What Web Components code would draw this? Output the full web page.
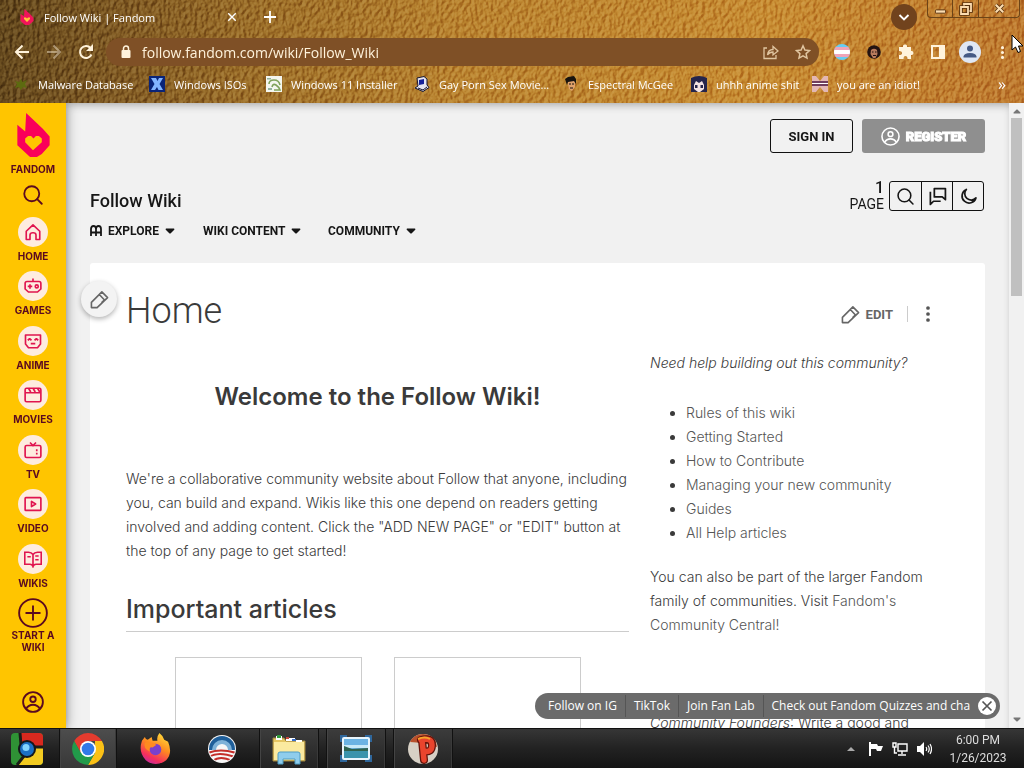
<!DOCTYPE html>
<html lang="en">
<head>
<meta charset="utf-8">
<title>Follow Wiki | Fandom</title>
<style>
html,body{margin:0;height:100%}
body{overflow:hidden;font-family:Roboto,"Liberation Sans",sans-serif;color:#3a3a3a}
</style>
</head>
<body>
<desktop-screen></desktop-screen>
<script>
const ICONS = {
  flame: ['0 0 34 46', '<path fill="#fa005a" d="M10 1 27 17 34 25V34L26 43 21 46H14L1 34V13L9 20Z"/><path fill="#ffc500" d="M17 39 9 31V27L12 24.500H15L17.500 27 20 24.500H23L26 27V31Z"/>'],
  search: ['0 0 24 24', '<g fill="none" stroke="currentColor" stroke-width="2.200" stroke-linecap="round"><circle cx="10.500" cy="10.500" r="9"/><path d="m17 17 5.500 5.500"/></g>'],
  home: ['0 0 24 24', '<path fill="none" stroke="currentColor" stroke-width="2.200" stroke-linejoin="round" d="M3 22V11L12 2.500 21 11V22H16V16Q16 13 12 13 8 13 8 16V22Z"/>'],
  games: ['0 0 24 24', '<g fill="none" stroke="currentColor" stroke-width="2.200"><path d="M4 6H20Q22.500 6 22.500 8.500V16L18 20H6L1.500 16V8.500Q1.500 6 4 6ZM12 6V2M5 12.500H11M8 9.500V15.500"/><circle cx="17" cy="12.500" r="2"/></g>'],
  anime: ['0 0 24 24', '<g fill="none" stroke="currentColor" stroke-width="2.200" stroke-linejoin="round"><path d="M2 4H22V16L18 21H6L2 16ZM5 11 7.500 9 10 11M14 11 16.500 9 19 11M9 15.500H15"/></g>'],
  movies: ['0 0 24 24', '<g fill="none" stroke="currentColor" stroke-width="2.200"><rect x="1.500" y="3" width="21" height="18" rx="2"/><path d="M2 9H22M6 3 9 8M12 3 15 8M18 3 21 8"/></g>'],
  tv: ['0 0 24 24', '<g fill="none" stroke="currentColor" stroke-width="2.200"><rect x="1.500" y="6" width="21" height="16" rx="2"/><path d="M8 2 12 6 16 2M17 11V13.500M17 15.500V18"/></g>'],
  video: ['0 0 24 24', '<g fill="none" stroke="currentColor" stroke-width="2.200" stroke-linejoin="round"><rect x="1.500" y="3.500" width="21" height="17" rx="1"/><path d="M10 8.500V15.500L15.500 12Z"/></g>'],
  wikis: ['0 0 24 24', '<g fill="none" stroke="currentColor" stroke-width="2.200"><path d="M12 6Q10 3 6 3H1V19H8Q11 19 12 22 13 19 16 19H23V3H18Q14 3 12 6V21M4.500 9H9M15 8H19.500M15 13H19.500"/></g>'],
  plus: ['0 0 32 32', '<g fill="none" stroke="currentColor" stroke-width="2"><circle cx="16" cy="16" r="14.800"/><path d="M16 8V24M8 16H24"/></g>'],
  user: ['0 0 24 24', '<g fill="none" stroke="currentColor" stroke-width="2"><circle cx="12" cy="12" r="10.800"/><circle cx="12" cy="9" r="3"/><path d="M4.500 19.500Q7 15 12 15 17 15 19.500 19.500"/></g>'],
  books: ['0 0 12 12', '<g fill="none" stroke="currentColor" stroke-width="1.800"><path d="M1 11V4Q1 1 3.500 1 6 1 6 4V11M6 4Q6 1 8.500 1 11 1 11 4V11M1 7.500H11"/></g>'],
  pencil: ['0 0 20 20', '<g fill="none" stroke="currentColor" stroke-width="1.700" stroke-linejoin="round"><path d="M1.500 18.500V13L12.500 2 18.500 8 7.500 18.500ZM9.800 4.800 15.500 10.800M12 13.500 14.500 11"/></g>'],
  chat: ['0 0 24 24', '<g fill="none" stroke="currentColor" stroke-width="2.200" stroke-linejoin="round"><path d="M8 2H22V16L18 12.500H8ZM3 6V22L7 18H16"/></g>'],
  moon: ['0 0 24 24', '<path fill="none" stroke="currentColor" stroke-width="2.400" stroke-linejoin="round" d="M9 2A10 10 0 1 0 22.500 14 8 8 0 0 1 9 2Z"/>'],
  dots: ['0 0 24 24', '<g fill="currentColor"><circle cx="12" cy="3" r="2.800"/><circle cx="12" cy="12" r="2.800"/><circle cx="12" cy="21" r="2.800"/></g>'],
  caret: ['0 0 10 6', '<path fill="currentColor" d="M1 .500H9Q10 1 9 2L5.500 5.500H4.500L1 2Q0 1 1 .500Z"/>'],
  cross: ['0 0 12 12', '<path stroke="currentColor" stroke-width="1.700" d="m1.500 1.500 9 9m0-9-9 9"/>'],
  add: ['0 0 12 12', '<path stroke="currentColor" stroke-width="1.800" d="M6 0V12M0 6H12"/>'],
  back: ['0 0 16 16', '<path fill="none" stroke="currentColor" stroke-width="2" d="M15 8H2M8.500 1.500 2 8 8.500 14.500"/>'],
  forward: ['0 0 16 16', '<path fill="none" stroke="currentColor" stroke-width="2" d="M1 8H14M7.500 1.500 14 8 7.500 14.500"/>'],
  reload: ['0 0 16 16', '<path fill="none" stroke="currentColor" stroke-width="2" d="M13.500 10.500A6 6 0 1 1 12.500 4L14 6"/><path fill="currentColor" d="M15 0V7H8Z"/>'],
  lock: ['0 0 12 14', '<rect x="1.500" y="5" width="9" height="8" rx="1" fill="currentColor"/><path fill="none" stroke="currentColor" stroke-width="1.500" d="M3.500 6V3.500A2.500 2.500 0 0 1 8.500 3.500V6"/>'],
  share: ['0 0 16 16', '<path fill="none" stroke="currentColor" stroke-width="1.300" d="M4 4H1V14.500H13V11M4.500 11Q5 5.500 10 5.500V2.500L15 7 10 11V8Q6.500 8 4.500 11Z"/>'],
  star: ['0 0 16 16', '<path fill="none" stroke="currentColor" stroke-width="1.500" d="m8 1.800 1.900 4.200 4.600.500-3.400 3.100.900 4.500L8 11.800 4 14.100l.900-4.500L1.500 6.500 6.100 6Z"/>'],
  flag: ['0 0 16 16', '<clipPath id="c"><circle cx="8" cy="8" r="8"/></clipPath><g clip-path="url(#c)"><path fill="#66cdf4" d="M0 0H16V16H0Z"/><path fill="#f0a4b8" d="M0 3H16V13H0Z"/><path fill="#fff" d="M0 6H16V10H0Z"/></g>'],
  face: ['0 0 14 14', '<circle cx="7" cy="7" r="6.800" fill="#231312"/><path fill="#b87a5c" d="M4 5Q7 2.500 10 5L10.500 9 8.500 13H6L3.500 9Z"/><path stroke="#231312" d="M5 7H6.500M8 7H9.500M6 10.500H9"/>'],
  puzzle: ['0 0 16 16', '<path fill="currentColor" d="M1 3H5Q4.500 .500 7 .500T9 3H13V7Q15.500 6.500 15.500 9T13 11V15H9.500Q9.500 12 7.500 12T5.500 15H1V11Q4 11 4 9T1 7Z"/>'],
  panel: ['0 0 16 16', '<path fill="none" stroke="currentColor" stroke-width="2" d="M2 2H14V14H2Z"/><path fill="currentColor" d="M9 2H14V14H9Z"/>'],
  avatar: ['0 0 22 22', '<circle cx="11" cy="11" r="11" fill="#dfe7f4"/><circle cx="11" cy="7.500" r="3" fill="#455a85"/><path fill="#455a85" d="M4.500 15.500Q5 12 11 12T17.500 15.500V16.500H4.500Z"/>'],
  chevron: ['0 0 12 12', '<path fill="none" stroke="currentColor" stroke-width="1.900" d="m1.500 4 4.500 4.500L10.500 4"/>'],
  fav: ['0 0 14 16', '<path fill="#f0145a" d="M4.500 0 11 6 13.500 9V12L9 16H5L.500 12V5L4 7Z"/><path fill="#ffc23c" d="M7 13 4 10V8.500H6L7 9.500 8 8.500H10V10Z"/>'],
  minimize: ['0 0 14 14', '<rect x="1.500" y="8.500" width="11" height="3.500" rx="1" fill="#fbdcb0" stroke="#54310f"/>'],
  restore: ['0 0 14 14', '<g fill="none" stroke="#54310f" stroke-width="3.600"><path d="M5 3.500V2H12V9H10.500M2 5H9V12H2Z"/></g><g fill="none" stroke="#fbdcb0" stroke-width="1.800"><path d="M5 3.500V2H12V9H10.500M2 5H9V12H2Z"/></g>'],
  winclose: ['0 0 14 14', '<path stroke="#54310f" stroke-width="4" d="m3 3 8 8m0-8-8 8"/><path stroke="#fbdcb0" stroke-width="2.300" d="m3 3 8 8m0-8-8 8"/>'],
  bmGreen: ['0 0 16 16', '<path fill="#5d6a10" d="m8 3 1.500 3L14 4 12 8 14 12 10 11 8 14 6 11 2 12 4 8 2 5 6 6Z"/>'],
  bmX: ['0 0 16 16', '<path fill="#0a2478" d="M0 0H16V16H0Z"/><path fill="#82b4ff" d="M2 2H7L8.500 5 10 2H14L10.500 8 14 14H9.500L8 11 6 14H2L5.500 8Z"/>'],
  bmLeaf: ['0 0 16 16', '<path fill="#f4f6ef" d="M0 0H16V16H0Z"/><path fill="none" stroke="#7fa25b" stroke-width="1.600" d="M3 8Q3 4 8 4T14 9M6 11Q7 7 10 9T14 14H8"/><path fill="#93b3a0" d="M1 2H5V3.500H1ZM2 12H6V14H2Z"/>'],
  bmPc: ['0 0 16 16', '<path fill="#e4e4f0" stroke="#171732" d="M3 2 10 .500 13 3V9L15 11.500 9 15.500 1 12 4 10Z"/><path fill="#15209a" d="M5 4 10 3V8L5 9Z"/><path stroke="#171732" d="m4 12 5 2 4-3"/>'],
  bmCartoon: ['0 0 16 16', '<path fill="#e0a16a" d="M4 4H12V11L9 15 6 13Z"/><path fill="#17130f" d="M2 3 5 1 11 0 13 3V8L11 5 5 6 4 9Z"/><path stroke="#17130f" d="M6 8H8M9 8H11M7 12H10"/>'],
  bmAnime: ['0 0 16 16', '<path fill="#25254c" d="M0 2Q8-2 16 2V16H0Z"/><path fill="#f3e3e3" d="m3 9 2-4 3 2 3-2 2 4v4l-4 3H7l-4-3Z"/><path fill="#25254c" d="M4 9H6.500V12H4ZM9.500 9H12V12H9.500Z"/>'],
  bmFlag: ['0 0 16 16', '<path fill="#e3b7b4" d="M0 0H4L8 5 12 0H16V16H12L8 11 4 16H0Z"/><path stroke="#4b1740" stroke-width="1.500" d="M0 6H16M0 9H16"/><path stroke="#fff" d="M0 7.500H16"/>'],
  oldChrome: ['0 0 32 32', '<clipPath id="o"><rect width="32" height="32" rx="4"/></clipPath><g clip-path="url(#o)"><path fill="#2f9235" d="M0 0H32V32H0Z"/><path fill="#d9291f" d="M9 0H32V14H16L10 9Z"/><path fill="#f3cb21" d="M32 15V32H7L16 20 22 15Z"/><path fill="none" stroke="#1c1c18" stroke-width="3" d="M9 0 10 12M32 14H21M6 32 13 23"/></g><circle cx="16" cy="16" r="9" fill="#14171c"/><circle cx="16" cy="16" r="7" fill="#1a6fc4"/><circle cx="15" cy="14.500" r="3.500" fill="#82d4ff"/>'],
  chrome: ['0 0 32 32', '<path fill="#e33b2e" d="M2.200 8A16 16 0 0 1 29.900 8H16L8.500 20Z"/><path fill="#fbc116" d="M29.900 8A16 16 0 0 1 16 32L22.900 20 23 8Z"/><path fill="#229a4a" d="M16 32A16 16 0 0 1 2.200 8L9.100 20 22.900 20Z"/><circle cx="16" cy="16" r="8" fill="#fff"/><circle cx="16" cy="16" r="6.300" fill="#3279e8"/>'],
  firefox: ['0 0 32 32', '<linearGradient id="f" x1=".800" y1="0" x2=".300" y2="1"><stop stop-color="#ffe03c"/><stop offset=".450" stop-color="#ff8a20"/><stop offset=".800" stop-color="#f5305c"/><stop offset="1" stop-color="#c52aa0"/></linearGradient><path fill="url(#f)" d="M20 0Q24 3 25 7L29 9Q34 21 27 28 16 36 6 28-2 20 2 8L5 4Q6 7 8 7L12 4 13 8 18 8Q17 4 20 0Z"/><circle cx="16" cy="17" r="6" fill="#7940cc"/><path fill="#ff8b20" d="M5 10Q10 8 17 12L13 15Q9 14 10 19 3 16 5 10Z"/>'],
  campaign: ['0 0 28 28', '<clipPath id="b"><circle cx="14" cy="14" r="13"/></clipPath><circle cx="14" cy="14" r="14" fill="#f7f7f7"/><g clip-path="url(#b)"><path fill="#1f5f9a" d="M0 0H28V15H21A7 7 0 0 0 7 15H0Z"/><path fill="#7fb2d8" d="M4 15A10 10 0 0 1 24 15H20A6 6 0 0 0 8 15Z"/><path fill="none" stroke="#c42f2b" stroke-width="2.200" d="M0 18Q12 13 28 18M1 22Q10 16 27 22M5 26Q12 20 24 26"/></g>'],
  explorer: ['0 0 34 32', '<path fill="#e6c662" stroke="#9d8440" d="M1 5H12L14 8H33V28H1Z"/><path fill="#fff" d="M4 3H10V7H4ZM14 5H23V8H14ZM24 7H30V10H24Z"/><path fill="#2d9b3b" d="M5 2H9V5H5Z"/><path fill="#c8463a" d="M14 4H17V6H14Z"/><path fill="#396fca" d="M20 6H24V8H20Z"/><path fill="#fbeaa0" d="M2 9H32V27H2Z"/><path fill="#8fcdec" stroke="#4f9dc4" d="M6 31V21Q6 19 8 19H26Q28 19 28 21V31H23V26H11V31Z"/>'],
  photo: ['0 0 32 28', '<path fill="#2f679c" d="M0 0H7V7H0ZM25 0H32V7H25ZM0 20H7V27H0ZM25 20H32V27H25Z"/><rect x="2" y="2" width="28" height="23" rx="2" fill="#e9f5fc"/><path fill="#6cb3e3" d="M4 4H28V14H4Z"/><path fill="#c9e9f8" d="M4 10H28V13H4Z"/><path fill="#2f624f" d="m4 11 8 3 16-1v3H4Z"/><path fill="#3a93ac" d="M4 16H28V23H4Z"/>'],
  pball: ['0 0 32 32', '<circle cx="16" cy="16" r="15" fill="#d7d0c5"/><path fill="#b8502c" d="M3 9Q7 1 16 1T29 9L30 14 16 10Z"/><path fill="none" stroke="#61140c" stroke-width="8" stroke-linecap="round" d="M15 7 17 27M14 7Q25 4 25 12T17 18"/><path fill="none" stroke="#e9442d" stroke-width="5.500" stroke-linecap="round" d="M15 7 17 27M14 7Q25 4 25 12T17 18"/><path stroke="#f7a42b" stroke-width="2" d="M11 6Q18 3 23 6"/>'],
  trayUp: ['0 0 8 6', '<path fill="#aaa" d="M0 5 4 1 8 5Z"/>'],
  trayFlag: ['0 0 16 16', '<path fill="#fff" d="M1 1H3V15H1ZM3 3H9L10 5H15L13 10H9L8 8H3Z"/>'],
  trayNet: ['0 0 16 16', '<path fill="none" stroke="#fff" stroke-width="1.400" d="M6 3H15V10H6ZM10 10V13M6 14H14M1 2H4V6H1ZM2.500 6V12H5"/>'],
  traySound: ['0 0 16 16', '<path fill="#fff" d="M1 5H4L8 1V15L4 11H1Z"/><path fill="none" stroke="#fff" stroke-width="1.200" d="M10 6Q11.500 8 10 10M12 4.500Q14.500 8 12 11.500M14 3Q17 8 14 13"/>'],
  cursor: ['0 0 13 20', '<path fill="#fff" stroke="#000" d="M1 1V16L4.500 13 7 18.500 9.500 17.500 7.500 12H12Z"/>'],
};

const el = (name, render) => customElements.define(name, class extends HTMLElement {
  connectedCallback() {
    if (this.shadowRoot) return;
    const t = document.createElement('template');
    t.innerHTML = render(this);
    this.attachShadow({mode: 'open'}).append(t.content.cloneNode(true));
  }
});
const icon = (name, w, h = w) => `<ui-icon name="${name}" w="${w}" h="${h}"></ui-icon>`;
const RESET = `:host,*{box-sizing:border-box}button{font:inherit;color:inherit;background:none;border:0;padding:0;display:flex;align-items:center;justify-content:center}a{color:inherit;text-decoration:none}`;

el('ui-icon', e => {
  const [box, body] = ICONS[e.getAttribute('name')];
  const w = e.getAttribute('w'), h = e.getAttribute('h');
  return `<style>:host{display:block;flex:none;width:${w}px;height:${h}px}svg{display:block}</style>
  <svg width="${w}" height="${h}" viewBox="${box}" fill="none" aria-hidden="true">${body}</svg>`;
});

el('leather-texture', () => `<style>:host{display:block;position:absolute;inset:0;background:linear-gradient(97deg,#664a1e 0,#825c24 12%,#a0722a 26%,#bb8530 45%,#c98e33 75%,#c07c30 100%);overflow:hidden}
svg{display:block;width:100%;height:100%;mix-blend-mode:soft-light;opacity:.6}</style>
<svg aria-hidden="true"><filter id="t" x="0" y="0" width="100%" height="100%" color-interpolation-filters="sRGB"><feTurbulence type="fractalNoise" baseFrequency=".26 .2" numOctaves="3" seed="4"/><feColorMatrix values="0 0 0 0 0 0 0 0 0 0 0 0 0 0 0 1 0 0 0 0"/><feDiffuseLighting surfaceScale="3" diffuseConstant=".75" lighting-color="#fff"><feDistantLight azimuth="210" elevation="42"/></feDiffuseLighting></filter><rect width="100%" height="100%" filter="url(#t)"/></svg>`);

el('tab-strip', () => `<style>${RESET}
:host{display:flex;align-items:center;height:34px;padding-left:20px;font:500 11px "Open Sans",sans-serif;color:#fff;position:relative}
.tab{display:flex;align-items:center;width:217px;gap:10px}.tab span{flex:1}
.new{margin-left:27px}.grow{flex:1}
.search{width:26px;height:26px;border-radius:50%;background:#71431d;margin-right:10px}
.win{display:grid;grid-template-columns:24px 26px 41px;height:18px;align-self:flex-start;border:1px solid #6c4417;border-top:0;border-radius:0 0 4px 4px;margin-right:4px}
.win button+button{border-left:1px solid #6c4417}</style>
<div class="tab">${icon('fav',14,16)}<span>Follow Wiki | Fandom</span><button aria-label="Close tab">${icon('cross',10)}</button></div>
<button class="new" aria-label="New tab">${icon('add',12)}</button><div class="grow"></div>
<button class="search" aria-label="Search tabs">${icon('chevron',12)}</button>
<div class="win"><button aria-label="Minimize">${icon('minimize',13)}</button><button aria-label="Restore">${icon('restore',14)}</button><button aria-label="Close">${icon('winclose',13)}</button></div>`);

el('nav-toolbar', () => `<style>${RESET}
:host{display:flex;align-items:center;height:36px;padding:0 6px;color:#fff3dc;position:relative}
button{width:32px;height:28px;flex:none}.dim{opacity:.45}
.box{display:flex;align-items:center;flex:1;height:28px;background:#7f5026;border-radius:14px;margin:0 7px 0 4px;padding-left:14px;gap:10px}
.box input{flex:1;min-width:0;border:0;background:none;padding:0;color:#fff3dc;font:14px "Open Sans",sans-serif}
.box button{color:#e0c5a0}.box button+button{margin-left:-10px}</style>
<button aria-label="Back">${icon('back',16)}</button><button class="dim" aria-label="Forward">${icon('forward',16)}</button><button aria-label="Reload">${icon('reload',16)}</button>
<div class="box">${icon('lock',12,14)}<input aria-label="Address" value="follow.fandom.com/wiki/Follow_Wiki"><button aria-label="Share">${icon('share',16)}</button><button aria-label="Bookmark">${icon('star',16)}</button></div>
<button aria-label="Flag extension">${icon('flag',16)}</button><button aria-label="Face extension">${icon('face',14)}</button><button aria-label="Extensions">${icon('puzzle',16)}</button><button aria-label="Side panel">${icon('panel',16)}</button><button aria-label="Profile">${icon('avatar',22)}</button><button aria-label="Menu">${icon('dots',13)}</button>`);

el('bookmark-bar', () => `<style>${RESET}
:host{display:grid;grid-template-columns:136px 117px 148px 149px 128px 121px 1fr auto;align-items:center;height:28px;padding:0 18px 0 13px;font:500 11px "Open Sans",sans-serif;color:#fff;position:relative}
a{display:flex;align-items:center;gap:9px;white-space:nowrap}.more{font-size:16px;line-height:20px}</style>
${[['bmGreen','Malware Database'],['bmX','Windows ISOs'],['bmLeaf','Windows 11 Installer'],['bmPc','Gay Porn Sex Movie...'],['bmCartoon','Espectral McGee'],['bmAnime','uhhh anime shit'],['bmFlag','you are an idiot!']].map(([i,t])=>`<a href="#">${icon(i,16)}<span>${t}</span></a>`).join('')}<button class="more" aria-label="More bookmarks">»</button>`);

el('browser-chrome', () => `<style>:host{display:block;position:relative;height:103px;flex:none}</style>
<leather-texture></leather-texture><tab-strip></tab-strip><nav-toolbar></nav-toolbar><bookmark-bar></bookmark-bar>`);

el('rail-item', e => `<style>${RESET}
:host{display:block}a{display:flex;flex-direction:column;align-items:center;gap:3px}
i{display:flex;align-items:center;justify-content:center;width:30px;height:30px;border-radius:50%;background:#feecdf;color:#e0154f}</style>
<a href="#"><i>${icon(e.getAttribute('icon'),18)}</i><slot></slot></a>`);

el('side-rail', () => `<style>${RESET}
:host{display:flex;flex-direction:column;align-items:center;width:66px;flex:none;background:#ffc500;color:#5a0a20;font:700 10px/12px Inter,sans-serif;text-align:center;padding:9px 0 15px;position:relative;box-shadow:0 0 12px rgba(0,0,0,.4)}
a{display:flex;flex-direction:column;align-items:center}
.brand{gap:6px}.find{margin:10px 0 12px}
nav{display:grid;grid-auto-rows:1fr;height:381px;flex:none}.start{width:60px;gap:1px}.me{margin-top:auto}</style>
<a class="brand" href="#">${icon('flame',34,45)}FANDOM</a>
<button class="find" aria-label="Search">${icon('search',20)}</button>
<nav>${['home','games','anime','movies','tv','video','wikis'].map(n=>`<rail-item icon="${n}">${n.toUpperCase()}</rail-item>`).join('')}</nav>
<a class="start" href="#">${icon('plus',30)}<span>START A<br>WIKI</span></a>
<button class="me" aria-label="Account">${icon('user',22)}</button>`);

el('wiki-header', () => `<style>${RESET}
:host{display:block;color:#161616;height:160px;flex:none}
.auth{display:flex;justify-content:flex-end;gap:9px;padding-top:16px;font-size:13px;font-weight:700}
.auth button{height:34px;border-radius:3px}
.sign{width:83px;border:1px solid #111}.reg{width:123px;gap:6px;background:#8f8f8f;color:#fff;font-weight:900;-webkit-text-stroke:1px #fff}
.mid{display:flex;align-items:center;height:30px;margin:28px 1px 0 0}
.mid a{flex:1;font-size:18px;font-weight:500;padding-top:8px}
.count{text-align:right;font-size:14px;line-height:16px;margin-right:5px}.count b{font-size:16px;font-weight:500;display:block}
.tools{display:flex;border:1px solid #111;border-radius:3px;height:30px}.tools button{width:31px}.tools button+button{border-left:1px solid #111}
nav{display:grid;grid-template-columns:113px 125px auto;justify-content:start;justify-items:start;font-size:12px;font-weight:700;margin-top:13px;line-height:14px}nav button{gap:6px;height:14px}</style>
<div class="auth"><button class="sign">SIGN IN</button><button class="reg">${icon('user',19)}REGISTER</button></div>
<div class="mid"><a href="#">Follow Wiki</a><div class="count"><b>1</b>PAGE</div><div class="tools"><button aria-label="Search">${icon('search',17)}</button><button aria-label="Discuss">${icon('chat',19)}</button><button aria-label="Dark theme">${icon('moon',17)}</button></div></div>
<nav><button>${icon('books',12)}EXPLORE ${icon('caret',10,6)}</button><button>WIKI CONTENT ${icon('caret',10,6)}</button><button>COMMUNITY ${icon('caret',10,6)}</button></nav>`);

el('wiki-article', () => `<style>${RESET}
:host{display:block;flex:1;min-height:0;background:#fff;padding:24px 36px 0;position:relative;border-radius:3px 3px 0 0;font:300 14px/24px Inter,sans-serif}
.fab{position:absolute;left:-9px;top:18px;width:36px;height:36px;border-radius:50%;background:#f3f3f3;box-shadow:0 2px 5px rgba(0,0,0,.3);color:#666}
.top{display:flex;align-items:center;height:46px;margin-top:1px}
h1{flex:1;margin:0;font:300 36px/46px Roboto,sans-serif}
.acts{display:flex;align-items:center;padding-top:6px}
.edit{gap:6px;font:700 13px Roboto,sans-serif;color:#666}.bar{width:1px;height:16px;background:#ccc;margin:0 11px 0 14px}.more{color:#555;width:18px;margin-right:12px}
.cols{display:grid;grid-template-columns:minmax(0,503px) minmax(0,1fr);gap:21px}
h2{margin:47px 0 0;text-align:center;font-size:24px;line-height:32px;font-weight:600}p{margin:0;white-space:nowrap}
.intro{margin-top:54px}
h3{margin:31px 0 0;padding-bottom:7px;border-bottom:1px solid #ccc;font-size:25px;line-height:30px;font-weight:500}
.cards{display:flex;justify-content:center;gap:32px;margin-top:25px}.cards div{width:187px;height:200px;border:1px solid #ccc}
aside{padding-top:17px}ul{margin:26px 0 20px;padding-left:36px}a{color:#555}.f{margin-top:74px}</style>
<button class="fab" aria-label="Edit page">${icon('pencil',19)}</button>
<div class="top"><h1>Home</h1><div class="acts"><button class="edit">${icon('pencil',19)}EDIT</button><span class="bar"></span><button class="more" aria-label="More">${icon('dots',16)}</button></div></div>
<div class="cols"><section><h2>Welcome to the Follow Wiki!</h2>
<p class="intro">We're a collaborative community website about Follow that anyone, including<br>you, can build and expand. Wikis like this one depend on readers getting<br>involved and adding content. Click the "ADD NEW PAGE" or "EDIT" button at<br>the top of any page to get started!</p>
<h3>Important articles</h3><div class="cards"><div></div><div></div></div></section>
<aside><p><em>Need help building out this community?</em></p>
<ul>${['Rules of this wiki','Getting Started','How to Contribute','Managing your new community','Guides','All Help articles'].map(t=>`<li><a href="#">${t}</a></li>`).join('')}</ul>
<p>You can also be part of the larger Fandom<br>family of communities. Visit <a href="#">Fandom's<br>Community Central!</a></p>
<p class="f"><em>Community Founders</em>: Write a good and</p></aside></div>`);

el('promo-bar', () => `<style>${RESET}
:host{display:flex;align-items:center;position:absolute;right:24px;bottom:9px;height:26px;width:465px;border-radius:13px;background:#6b6b6b;color:#fff;font:500 12px "Open Sans",sans-serif;padding:0 4px 0 5px;white-space:nowrap}
a{padding:3px 8px;line-height:16px;border-right:1px solid #555}a:last-of-type{border:0;flex:1;min-width:0}
button{width:18px;height:18px;border-radius:50%;background:#fff;color:#555;flex:none}</style>
<a href="#">Follow on IG</a><a href="#">TikTok</a><a href="#">Join Fan Lab</a><a href="#">Check out Fandom Quizzes and cha</a><button aria-label="Close">${icon('cross',12)}</button>`);

el('page-scrollbar', () => `<style>:host{display:flex;flex-direction:column;align-items:center;width:15px;flex:none;background:#f1f1f1;color:#777;padding:6px 0}
.up{transform:rotate(180deg)}.thumb{width:11px;height:178px;background:#c0c0c0;margin:4px 0 auto}</style>
<ui-icon class="up" name="caret" w="8" h="5"></ui-icon><div class="thumb"></div>${icon('caret',8,5)}`);

el('task-bar', () => `<style>${RESET}
:host{display:flex;align-items:center;height:40px;flex:none;background:linear-gradient(#363636,#222 50%,#141414);border-top:1px solid #111;color:#ddd;font-size:12px}
.apps{display:grid;grid-template-columns:54px 5px 58px 76px 58px 8px 60px 7px 60px 7px 60px;height:100%;flex:none}
.open{background:linear-gradient(#3c3c3c,#232323);border:1px solid #111;border-width:0 1px;box-shadow:inset 1px 0 #444,inset -1px 0 #3a3a3a}.active{background:linear-gradient(#4d4d4d,#383838)}
.tray{display:flex;align-items:center;margin-left:auto;gap:8px;padding-right:8px}.up{margin-right:5px}
.clock{text-align:center;line-height:18px;width:76px}</style>
<div class="apps"><button aria-label="Start">${icon('oldChrome',32)}</button><span></span><button class="open active" aria-label="Chrome">${icon('chrome',32)}</button><button aria-label="Firefox">${icon('firefox',31)}</button><button aria-label="Campaign">${icon('campaign',28)}</button><span></span><button class="open" aria-label="Explorer">${icon('explorer',34,32)}</button><span></span><button class="open" aria-label="Pictures">${icon('photo',32,28)}</button><span></span><button class="open" aria-label="Pinball">${icon('pball',32)}</button></div>
<div class="tray"><button class="up" aria-label="Hidden icons">${icon('trayUp',8,6)}</button>${icon('trayFlag',16)}${icon('trayNet',16)}${icon('traySound',16)}<div class="clock">6:00 PM<br>1/26/2023</div></div>`);

el('desktop-screen', () => `<style>
:host{display:flex;flex-direction:column;height:100vh;position:relative}
.view{display:flex;flex:1;min-height:0;position:relative;overflow:hidden}
main{flex:1;min-width:0;display:flex;flex-direction:column;background:#f1f1f1;padding:0 24px;overflow:hidden;box-shadow:inset 0 5px 8px -3px rgba(0,0,0,.3)}
.pointer{position:absolute;right:0;top:34px}</style>
<browser-chrome></browser-chrome>
<div class="view"><side-rail></side-rail><main><wiki-header></wiki-header><wiki-article></wiki-article></main><page-scrollbar></page-scrollbar><promo-bar></promo-bar></div>
<task-bar></task-bar><div class="pointer">${icon('cursor',13,20)}</div>`);
</script>
</body>
</html>
